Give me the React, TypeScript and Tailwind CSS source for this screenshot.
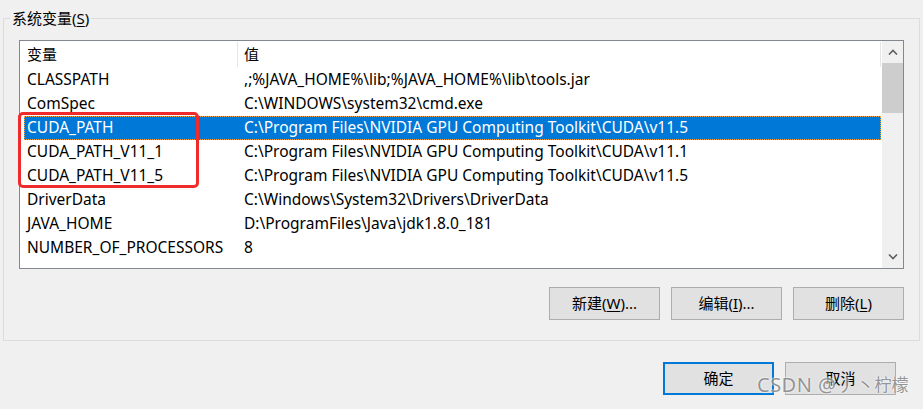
import React from "react";

const rows: [string, string][] = [
  ["CLASSPATH", ",;%JAVA_HOME%\\lib;%JAVA_HOME%\\lib\\tools.jar"],
  ["ComSpec", "C:\\WINDOWS\\system32\\cmd.exe"],
  ["CUDA_PATH", "C:\\Program Files\\NVIDIA GPU Computing Toolkit\\CUDA\\v11.5"],
  ["CUDA_PATH_V11_1", "C:\\Program Files\\NVIDIA GPU Computing Toolkit\\CUDA\\v11.1"],
  ["CUDA_PATH_V11_5", "C:\\Program Files\\NVIDIA GPU Computing Toolkit\\CUDA\\v11.5"],
  ["DriverData", "C:\\Windows\\System32\\Drivers\\DriverData"],
  ["JAVA_HOME", "D:\\ProgramFiles\\Java\\jdk1.8.0_181"],
  ["NUMBER_OF_PROCESSORS", "8"],
];

function Btn({ children, primary }: { children: React.ReactNode; primary?: boolean }) {
  return (
    <div
      className={
        "flex items-center justify-center bg-[#e1e1e1] text-[15px] text-black " +
        (primary ? "w-[111px] h-[33px] border-2 border-[#0078d7]" : "w-[111px] h-[33px] border border-[#adadad]")
      }
    >
      {children}
    </div>
  );
}

export default function App() {
  return (
    <div
      className="relative w-[923px] h-[409px] overflow-hidden bg-[#f0f0f0] text-black"
      style={{ fontFamily: '"Noto Sans", "Noto Sans CJK SC", sans-serif' }}
    >
      <fieldset className="ml-[3px] mt-[8px] w-[917px] h-[333px] border border-[#dcdcdc] p-0 m-0 flex flex-col">
        <legend className="ml-[6px] px-[2px] text-[15px] leading-[20px]">
          系统变量(<span className="underline underline-offset-2">S</span>)
        </legend>
        <div className="pl-[15px] pt-[12px]">
          <div className="relative w-[885px] h-[229px] border border-[#828790] bg-white flex overflow-visible">
            <div className="flex-1 flex flex-col overflow-hidden">
              <div className="h-[27px] flex items-center shrink-0">
                <div className="w-[217px] pl-[7px] text-[15px]">变量</div>
                <div className="w-px h-[25px] bg-[#e5e5e5]" />
                <div className="flex-1 pl-[6px] text-[15px]">值</div>
                <div className="w-px h-[25px] bg-[#e5e5e5] mr-[1px]" />
              </div>
              {rows.map(([k, v], i) => {
                const sel = i === 2;
                return (
                  <div
                    key={k}
                    className={
                      "h-[24px] shrink-0 flex items-center ml-[4px] mr-[1px] text-[15.5px] " +
                      (sel ? "bg-[#0078d7] text-white border border-dotted border-[#f5a54a]" : "border border-transparent")
                    }
                  >
                    <div className="w-[216px] pl-[2px] whitespace-nowrap">{k}</div>
                    <div className="flex-1 pl-[3px] whitespace-nowrap">{v}</div>
                  </div>
                );
              })}
            </div>
            <div className="w-[21px] bg-[#f0f0f0] flex flex-col shrink-0">
              <div className="h-[22px] flex items-center justify-center">
                <svg width="10" height="6" viewBox="0 0 10 6">
                  <path d="M1 5.5 L5 1.5 L9 5.5" stroke="#606060" strokeWidth="1.6" fill="none" />
                </svg>
              </div>
              <div className="h-[50px] bg-[#cdcdcd]" />
              <div className="flex-1" />
              <div className="h-[22px] flex items-center justify-center">
                <svg width="10" height="6" viewBox="0 0 10 6">
                  <path d="M1 0.5 L5 4.5 L9 0.5" stroke="#606060" strokeWidth="1.6" fill="none" />
                </svg>
              </div>
            </div>
            <div className="absolute left-[-2px] top-[71px] w-[181px] h-[76px] border-[3px] border-[#ef2b2b] rounded-[5px]" />
          </div>
        </div>
        <div className="flex justify-end gap-[11px] pr-[15px] pt-[18px]">
          <Btn>新建(<span className="underline underline-offset-2">W</span>)...</Btn>
          <Btn>编辑(<span className="underline underline-offset-2">I</span>)...</Btn>
          <Btn>删除(<span className="underline underline-offset-2">L</span>)</Btn>
        </div>
      </fieldset>
      <div className="flex justify-end gap-[11px] pr-[27px] pt-[21px]">
        <Btn primary>确定</Btn>
        <Btn>取消</Btn>
      </div>
      <div
        className="absolute left-[757px] top-[371px] flex items-center leading-[28px] text-[#8c8c8c] opacity-90 whitespace-nowrap"
        style={{ textShadow: "0 0 2px #fff, 0 0 2px #fff" }}
      >
        <span className="text-[20px] tracking-[0.5px]">CSDN @</span>
        <span className="text-[18px] ml-[1px]">丿</span>
        <span className="text-[18px] ml-[1px]">丶</span>
        <span className="text-[17px]">柠檬</span>
      </div>
    </div>
  );
}
